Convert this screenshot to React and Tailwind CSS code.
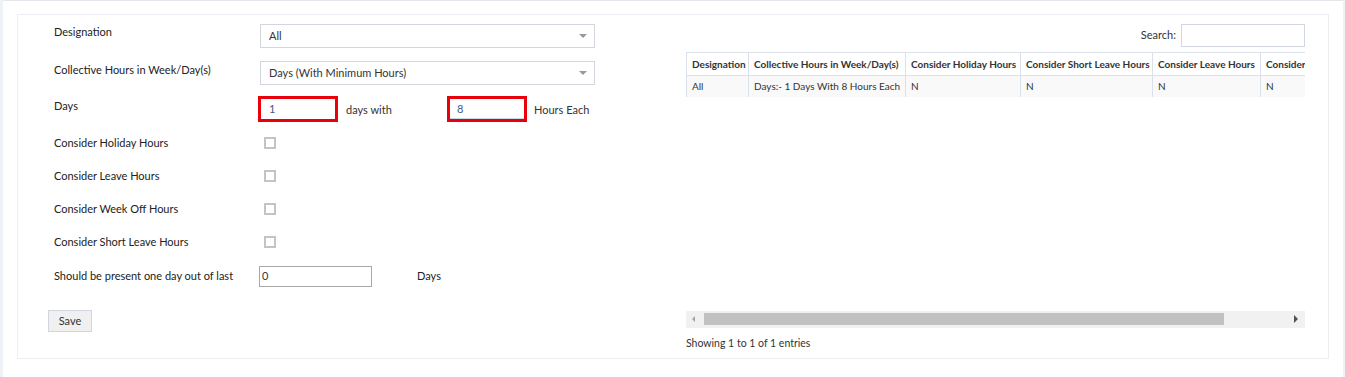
import React from 'react';

const font = { fontFamily: 'Lato, "Open Sans", sans-serif' };

const Caret = () => (
  <span className="ml-auto mr-[7px] h-0 w-0 border-x-[4px] border-t-[4px] border-x-transparent border-t-[#999]" />
);

const SelectBox = ({ value }) => (
  <div className="flex h-[24px] w-[335px] items-center border border-[#d2d6de] bg-white pl-[8px] text-[11px] text-[#333]">
    <span>{value}</span>
    <Caret />
  </div>
);

const Checkbox = () => (
  <span className="block h-[12px] w-[12px] border-2 border-[#c4c4c4] bg-white" />
);

const checkRows = [
  'Consider Holiday Hours',
  'Consider Leave Hours',
  'Consider Week Off Hours',
  'Consider Short Leave Hours',
];

const columns = [
  { title: 'Designation', w: 'w-[62px]', value: 'All' },
  { title: 'Collective Hours in Week/Day(s)', w: 'w-[157px]', value: 'Days:- 1 Days With 8 Hours Each' },
  { title: 'Consider Holiday Hours', w: 'w-[115px]', value: 'N' },
  { title: 'Consider Short Leave Hours', w: 'w-[132px]', value: 'N' },
  { title: 'Consider Leave Hours', w: 'w-[108px]', value: 'N' },
  { title: 'Consider Week Off Hours', w: 'w-[125px]', value: 'N' },
];

const LeftForm = () => (
  <div className="w-[600px] pl-[30px] pt-[9px]">
    <div className="flex h-[24px] items-start">
      <label className="w-[212px] pl-[6px] text-[11px] leading-[16px] text-[#222]">Designation</label>
      <SelectBox value="All" />
    </div>
    <div className="mt-[13px] flex h-[24px] items-start">
      <label className="w-[212px] pl-[6px] pt-[1px] text-[11px] leading-[16px] text-[#222]">Collective Hours in Week/Day(s)</label>
      <SelectBox value="Days (With Minimum Hours)" />
    </div>
    <div className="mt-[11px] flex h-[26px] items-start">
      <label className="w-[210px] pl-[6px] pt-[2px] text-[11px] leading-[16px] text-[#222]">Days</label>
      <div className="flex h-[26px] w-[80px] items-center border-[3px] border-[#e8000b] bg-white pl-[8px] text-[11px] text-[#3b5b8a]">1</div>
      <span className="ml-[8px] w-[101px] pt-[6px] text-[11px] leading-[16px] text-[#333]">days with</span>
      <div className="flex h-[26px] w-[80px] items-center border-[3px] border-[#e8000b] bg-white pl-[7px] text-[11px] text-[#3b5b8a] shadow-[inset_0_-1px_0_#c9d6ea]">8</div>
      <span className="ml-[7px] pt-[6px] text-[11px] leading-[16px] text-[#333]">Hours Each</span>
    </div>
    <div className="mt-[13px] flex flex-col gap-[17px]">
      {checkRows.map((t) => (
        <div key={t} className="flex h-[16px] items-center">
          <label className="w-[216px] pl-[6px] text-[11px] leading-[16px] text-[#222]">{t}</label>
          <Checkbox />
        </div>
      ))}
    </div>
    <div className="mt-[17px] flex h-[21px] items-start">
      <label className="w-[211px] pl-[6px] pt-[1px] text-[11px] leading-[16px] text-[#222]">Should be present one day out of last</label>
      <div className="mt-[-1px] flex h-[21px] w-[113px] items-center border border-[#a9a9a9] bg-white pl-[2px] text-[11px] text-[#333]">0</div>
      <span className="ml-[45px] pt-[1px] text-[11px] leading-[16px] text-[#222]">Days</span>
    </div>
    <button className="mt-[22px] flex h-[22px] w-[44px] items-center justify-center border border-[#cfd6e0] bg-[#f0f0f0] text-[11px] text-[#333]">
      Save
    </button>
  </div>
);

const RightTable = () => (
  <div className="ml-[68px] w-[619px] pt-[9px]">
    <div className="flex h-[23px] items-center justify-end">
      <span className="mr-[5px] text-[11px] text-[#333]">Search:</span>
      <div className="h-[23px] w-[124px] border border-[#d2d6de] bg-white" />
    </div>
    <div className="mt-[5px] overflow-hidden">
      <table className="w-[699px] table-fixed border-collapse text-[10px] text-[#333]">
        <thead>
          <tr className="h-[23px] bg-white">
            {columns.map((c) => (
              <th key={c.title} className={`${c.w} overflow-hidden whitespace-nowrap border border-[#dbe1ea] px-[5px] text-left font-bold`}>
                {c.title}
              </th>
            ))}
          </tr>
        </thead>
        <tbody>
          <tr className="h-[21px] bg-[#f9f9f9]">
            {columns.map((c) => (
              <td key={c.title} className="overflow-hidden whitespace-nowrap border-x border-[#dbe1ea] px-[5px] text-left">
                {c.value}
              </td>
            ))}
          </tr>
        </tbody>
      </table>
    </div>
    <div className="mt-[214px] flex h-[17px] items-center bg-[#f1f1f1]">
      <span className="ml-[6px] h-0 w-0 border-y-[3px] border-r-[3px] border-y-transparent border-r-[#a3a3a3]" />
      <span className="ml-[9px] h-[12px] w-[520px] bg-[#c1c1c1]" />
      <span className="ml-auto mr-[7px] h-0 w-0 border-y-[4px] border-l-[4px] border-y-transparent border-l-[#505050]" />
    </div>
    <div className="mt-[8px] text-[10.5px] leading-[14px] text-[#333]">Showing 1 to 1 of 1 entries</div>
  </div>
);

export default function App() {
  return (
    <div className="h-[377px] w-full bg-[#eef1f6] pl-[3px] pr-[2px]" style={font}>
      <div className="mt-0 h-[377px] border-t border-[#e3e6eb] bg-white px-[14px] pt-[13px]">
        <div className="flex h-[345px] w-[1312px] border border-[#eceef1] bg-white">
          <LeftForm />
          <RightTable />
        </div>
      </div>
    </div>
  );
}
